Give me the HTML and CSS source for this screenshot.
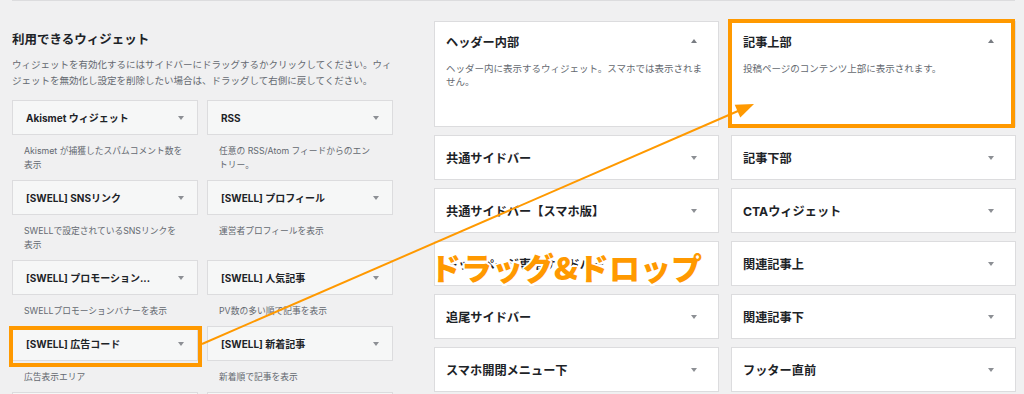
FILE: index.html
```html
<!DOCTYPE html>
<html lang="ja">
<head>
<meta charset="UTF-8">
<meta name="viewport" content="width=device-width, initial-scale=1.0">
<title>ウィジェット</title>
<link rel="stylesheet" href="styles.css">
</head>
<body>
<div class="topline"></div>
<div class="page">
    <section class="available">
        <h2>利用できるウィジェット</h2>
        <p class="intro">ウィジェットを有効化するにはサイドバーにドラッグするかクリックしてください。ウィ<br>ジェットを無効化し設定を削除したい場合は、ドラッグして右側に戻してください。</p>
        <div class="widget-list">
            <div class="widget">
                <div class="widget-top"><span>Akismet ウィジェット</span><i class="arrow"></i></div>
                <p class="widget-desc">Akismet が捕獲したスパムコメント数を<br>表示</p>
            </div>
            <div class="widget">
                <div class="widget-top"><span>RSS</span><i class="arrow"></i></div>
                <p class="widget-desc">任意の RSS/Atom フィードからのエン<br>トリー。</p>
            </div>
            <div class="widget">
                <div class="widget-top"><span>[SWELL] SNSリンク</span><i class="arrow"></i></div>
                <p class="widget-desc">SWELLで設定されているSNSリンクを<br>表示</p>
            </div>
            <div class="widget">
                <div class="widget-top"><span>[SWELL] プロフィール</span><i class="arrow"></i></div>
                <p class="widget-desc">運営者プロフィールを表示</p>
            </div>
            <div class="widget">
                <div class="widget-top"><span>[SWELL] プロモーション...</span><i class="arrow"></i></div>
                <p class="widget-desc">SWELLプロモーションバナーを表示</p>
            </div>
            <div class="widget">
                <div class="widget-top"><span>[SWELL] 人気記事</span><i class="arrow"></i></div>
                <p class="widget-desc">PV数の多い順で記事を表示</p>
            </div>
            <div class="widget">
                <div class="widget-top"><span>[SWELL] 広告コード</span><i class="arrow"></i></div>
                <p class="widget-desc">広告表示エリア</p>
            </div>
            <div class="widget">
                <div class="widget-top"><span>[SWELL] 新着記事</span><i class="arrow"></i></div>
                <p class="widget-desc">新着順で記事を表示</p>
            </div>
            <div class="widget">
                <div class="widget-top"></div>
            </div>
            <div class="widget">
                <div class="widget-top"></div>
            </div>
        </div>
    </section>

    <section class="areas">
        <div class="area-col">
            <div class="area open">
                <div class="area-head"><h3>ヘッダー内部</h3><i class="arrow up"></i></div>
                <p class="area-desc">ヘッダー内に表示するウィジェット。スマホでは表示されま<br>せん。</p>
            </div>
            <div class="area"><div class="area-head"><h3>共通サイドバー</h3><i class="arrow"></i></div></div>
            <div class="area"><div class="area-head"><h3>共通サイドバー【スマホ版】</h3><i class="arrow"></i></div></div>
            <div class="area"><div class="area-head"><h3>トップページ専用サイドバー</h3><i class="arrow"></i></div></div>
            <div class="area"><div class="area-head"><h3>追尾サイドバー</h3><i class="arrow"></i></div></div>
            <div class="area"><div class="area-head"><h3>スマホ開閉メニュー下</h3><i class="arrow"></i></div></div>
        </div>
        <div class="area-col">
            <div class="area open">
                <div class="area-head"><h3>記事上部</h3><i class="arrow up"></i></div>
                <p class="area-desc">投稿ページのコンテンツ上部に表示されます。</p>
            </div>
            <div class="area"><div class="area-head"><h3>記事下部</h3><i class="arrow"></i></div></div>
            <div class="area"><div class="area-head"><h3>CTAウィジェット</h3><i class="arrow"></i></div></div>
            <div class="area"><div class="area-head"><h3>関連記事上</h3><i class="arrow"></i></div></div>
            <div class="area"><div class="area-head"><h3>関連記事下</h3><i class="arrow"></i></div></div>
            <div class="area"><div class="area-head"><h3>フッター直前</h3><i class="arrow"></i></div></div>
        </div>
    </section>
</div>

<!-- annotations drawn over the screenshot -->
<div class="mark mark-widget"></div>
<div class="mark mark-area"></div>
<svg class="drag-arrow" width="1024" height="394" viewBox="0 0 1024 394">
    <line x1="202" y1="344" x2="738" y2="111" stroke="#ff9900" stroke-width="2"/>
    <polygon points="754,104 734.7,104.8 740.3,117.6" fill="#ff9900"/>
</svg>
<div class="drag-label">ドラッグ&amp;ドロップ</div>
</body>
</html>
```

FILE: styles.css
```css
body {
    margin: 0;
    width: 1024px;
    height: 394px;
    overflow: hidden;
    position: relative;
    background-color: #f0f0f1;
    color: #1d2327;
    font-family: "Inter", "Noto Sans CJK JP", sans-serif;
}
.topline {
    height: 1px;
    width: 1003px;
    margin-left: 12px;
    background-color: #dcdcde;
}
.page {
    display: flex;
    padding-left: 12px;
}

/* available widgets */
.available {
    width: 381px;
    flex-shrink: 0;
}
.available h2 {
    margin: 30px 0 0;
    font-size: 12.5px;
    line-height: 18px;
    font-weight: 700;
}
.intro {
    margin: 8px 0 0;
    font-size: 9.5px;
    line-height: 16px;
    color: #646970;
    white-space: nowrap;
}
.widget-list {
    display: grid;
    grid-template-columns: 186px 186px;
    column-gap: 9px;
    margin-top: 11px;
}
.widget-top {
    height: 35px;
    box-sizing: border-box;
    display: flex;
    align-items: center;
    justify-content: space-between;
    padding: 0 13px;
    border: 1px solid #dcdcde;
    background-color: #f6f7f7;
    font-size: 10px;
    font-weight: 700;
}
.widget-desc {
    margin: 9px 12px 8px;
    font-size: 8.75px;
    line-height: 14px;
    color: #646970;
    white-space: nowrap;
}

/* sidebar areas */
.areas {
    display: flex;
    gap: 12px;
    margin-left: 41px;
    margin-top: 20px;
}
.area-col {
    width: 285px;
    display: flex;
    flex-direction: column;
    gap: 8px;
}
.area {
    background-color: white;
    border: 1px solid #dcdcde;
    box-sizing: border-box;
}
.area-head {
    height: 43px;
    display: flex;
    align-items: center;
    justify-content: space-between;
    padding: 0 21px 0 11px;
}
.area-head h3 {
    margin: 0;
    font-size: 12.2px;
    font-weight: 700;
}
.area.open {
    height: 106px;
}
.area.open .area-head {
    height: 40px;
}
.area-desc {
    margin: 1px 11px 0;
    font-size: 9.5px;
    line-height: 12.5px;
    color: #646970;
    white-space: nowrap;
}

/* small toggle triangles */
.arrow {
    width: 0;
    height: 0;
    border-left: 3px solid transparent;
    border-right: 3px solid transparent;
    border-top: 4px solid #8c8f94;
}
.arrow.up {
    border-top: none;
    border-bottom: 4px solid #787c82;
    margin-top: -3px;
}

/* orange annotations */
.mark {
    position: absolute;
    box-sizing: border-box;
    border: 4px solid #ff9900;
}
.mark-widget {
    left: 9px;
    top: 326px;
    width: 193px;
    height: 41px;
}
.mark-area {
    left: 728px;
    top: 19px;
    width: 287px;
    height: 109px;
}
.drag-arrow {
    position: absolute;
    left: 0;
    top: 0;
    pointer-events: none;
}
.drag-label {
    position: absolute;
    left: 430px;
    top: 251px;
    font-family: "Noto Sans CJK JP", sans-serif;
    font-size: 31px;
    line-height: 31px;
    font-weight: 900;
    color: #ff9900;
    white-space: nowrap;
    text-shadow: 2px 0 0 #fff, -2px 0 0 #fff, 0 2px 0 #fff, 0 -2px 0 #fff,
        1.5px 1.5px 0 #fff, -1.5px -1.5px 0 #fff, 1.5px -1.5px 0 #fff, -1.5px 1.5px 0 #fff;
}
```
